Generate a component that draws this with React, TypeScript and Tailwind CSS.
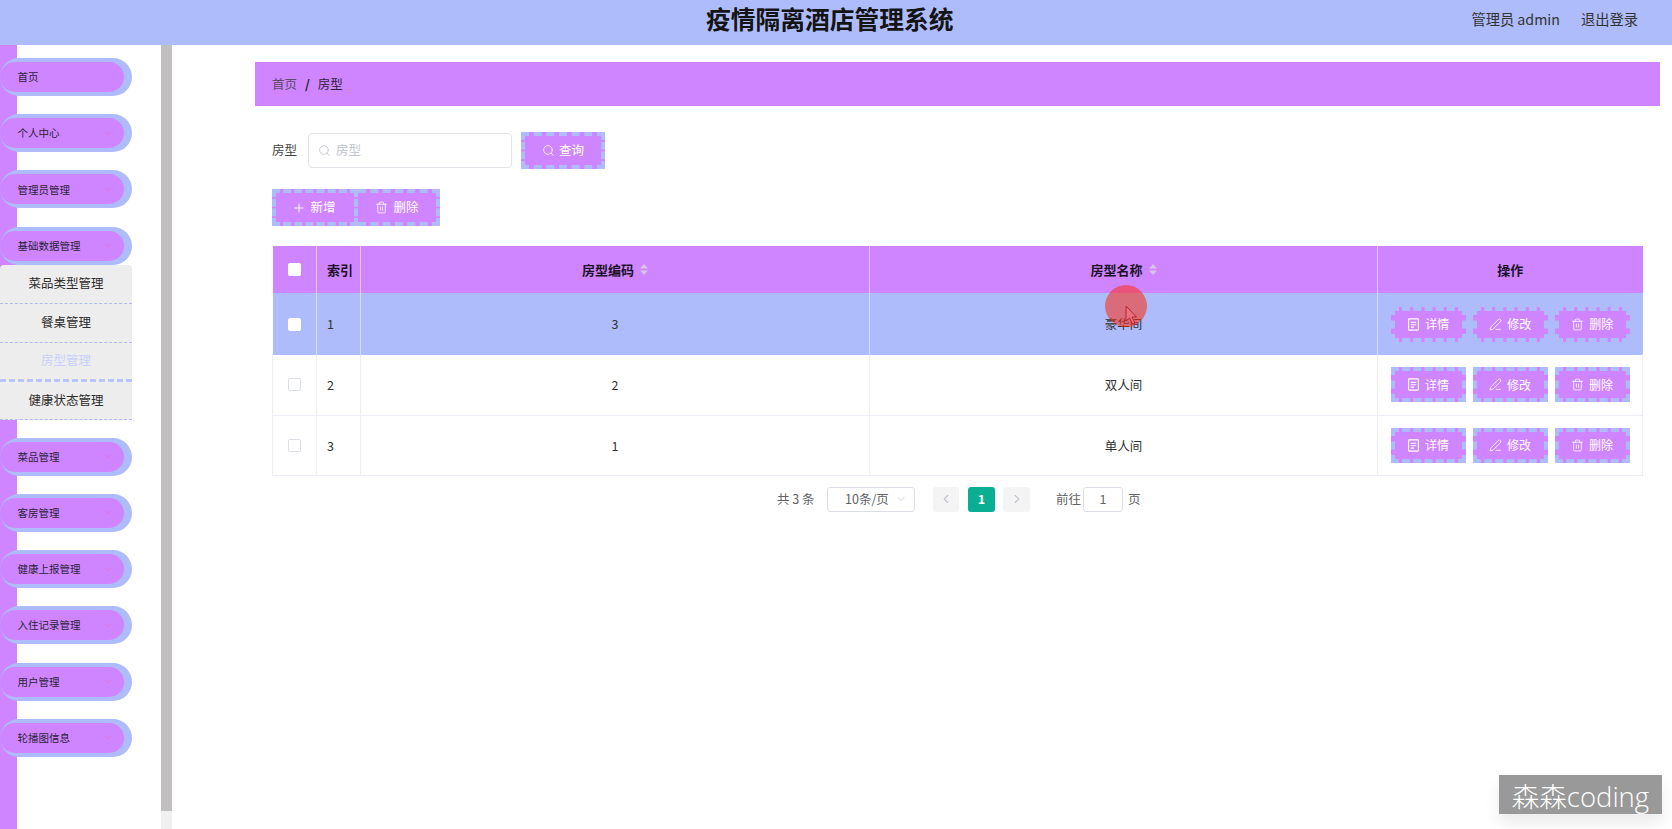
import React from 'react';
import { ChevronDown, ChevronLeft, ChevronRight, PenLine, Plus, Search, Trash2 } from 'lucide-react';

const menuTop = ['首页', '个人中心', '管理员管理', '基础数据管理'];
const menuBottom = ['菜品管理', '客房管理', '健康上报管理', '入住记录管理', '用户管理', '轮播图信息'];
const rows = [
  { id: 1, code: '3', name: '豪华间' },
  { id: 2, code: '2', name: '双人间' },
  { id: 3, code: '1', name: '单人间' },
];

const MenuPill = ({ label, arrow = true }: { label: string; arrow?: boolean }) => (
  <div className="w-[132px] h-[38px] rounded-[19px] bg-[#aebcfb] py-[4px] pr-[8px]">
    <div className="h-full rounded-[15px] bg-[#cf85ff] pl-[17.5px] pr-[11px] flex items-center justify-between text-[10.5px] text-[#2b2338]">
      <span>{label}</span>
      {arrow && <ChevronDown className="w-[11px] h-[11px] text-[#e86cc8]" strokeWidth={1.5} />}
    </div>
  </div>
);

const TicketIcon = () => (
  <svg className="w-[13px] h-[13px]" viewBox="0 0 12 12" fill="none" stroke="currentColor" strokeWidth="1">
    <rect x="1.5" y="0.8" width="9" height="10.4" rx="0.5" />
    <path d="M3.5 4h5M3.5 6.2h5M3.5 8.4h3" />
  </svg>
);

const Caret = () => (
  <svg className="w-[8px] h-[11px] ml-[6px]" viewBox="0 0 8 11" fill="#d9c3e8">
    <path d="M4 0l4 4.5H0zM4 11L0 6.5h8z" />
  </svg>
);

const RowButton = ({ icon, label }: { icon: React.ReactNode; label: string }) => (
  <button className="w-[75px] h-[35px] bg-[#cf85ff] border-4 border-dashed border-[#aebcfb] text-white text-[12px] flex items-center justify-center gap-[5px]">
    {icon}
    <span>{label}</span>
  </button>
);

const App = () => {
  return (
    <div className="h-screen overflow-hidden flex flex-col bg-white font-['Noto_Sans_CJK_SC','Noto_Sans',sans-serif] text-[#333]">
      <header className="h-[45px] flex-none bg-[#aebcfb] flex items-center justify-between pl-[706px] pr-[34px] pb-[8px]">
        <h1 className="text-[24.75px] font-bold text-[#141414] leading-none whitespace-nowrap">疫情隔离酒店管理系统</h1>
        <div className="flex items-center gap-[21px] text-[14.25px] text-[#333]">
          <span>管理员 admin</span>
          <span>退出登录</span>
        </div>
      </header>

      <div className="flex-1 flex min-h-0">
        <aside className="w-[161px] flex-none pt-[13px] flex flex-col gap-[18.2px] bg-[linear-gradient(to_right,#cf85ff_17px,#ffffff_17px)]">
          {menuTop.slice(0, 3).map((m, i) => (
            <MenuPill key={m} label={m} arrow={i > 0} />
          ))}
          <div>
            <MenuPill label={menuTop[3]} />
            <div className="w-[132px] bg-[#eeeded] rounded-t-[4px] text-[12.5px] text-[#2c2c2c] text-center">
              <div className="h-[39px] flex items-center justify-center border-b border-dashed border-[#aebcfb]">菜品类型管理</div>
              <div className="h-[39px] flex items-center justify-center border-b border-dashed border-[#aebcfb]">餐桌管理</div>
              <div className="h-[39px] flex items-center justify-center border-b-[3px] border-dashed border-[#b9c5fb] text-[#c9d0fb]">房型管理</div>
              <div className="h-[38px] flex items-center justify-center border-b border-dashed border-[#aebcfb]">健康状态管理</div>
            </div>
          </div>
          {menuBottom.map((m) => (
            <MenuPill key={m} label={m} />
          ))}
        </aside>

        <div className="w-[11px] flex-none flex flex-col bg-[#f1f0f1]">
          <div className="h-[766px] bg-[#c1bfc0]" />
        </div>

        <main className="flex-1 min-w-0 pt-[17px] pl-[83px] pr-[12px]">
          <div className="h-[44px] bg-[#cf85ff] flex items-center pl-[17px] text-[12.5px]">
            <span className="text-[#5b4a68]">首页</span>
            <span className="mx-[8px] font-bold text-[#222]">/</span>
            <span className="text-[#2b2338]">房型</span>
          </div>

          <div className="pl-[17px] pr-[17px]">
            <div className="mt-[26px] h-[37px] flex items-center text-[12.5px]">
              <span className="w-[36px] text-[#444]">房型</span>
              <div className="w-[204px] h-[35px] rounded-[4px] border border-[#e2e4ea] bg-white flex items-center pl-[9px] gap-[5px] text-[#c0c4cc]">
                <Search className="w-[13px] h-[13px]" strokeWidth={1.5} />
                <span>房型</span>
              </div>
              <button className="ml-[9px] w-[84px] h-[37px] bg-[#cf85ff] border-4 border-dashed border-[#aebcfb] text-white flex items-center justify-center gap-[4px]">
                <Search className="w-[13px] h-[13px]" strokeWidth={1.5} />
                <span>查询</span>
              </button>
            </div>

            <div className="mt-[20px] h-[37px] flex text-[12.5px] text-white">
              <button className="w-[86px] h-full bg-[#cf85ff] border-4 border-dashed border-[#aebcfb] flex items-center justify-center gap-[4px] pr-[2px]">
                <Plus className="w-[14px] h-[14px]" strokeWidth={1.5} />
                <span>新增</span>
              </button>
              <button className="w-[82px] h-full bg-[#cf85ff] border-y-4 border-r-4 border-dashed border-[#aebcfb] flex items-center justify-center gap-[5px]">
                <Trash2 className="w-[13px] h-[13px]" strokeWidth={1.5} />
                <span>删除</span>
              </button>
            </div>

            <div className="relative mt-[20px]">
              <table className="w-full table-fixed border-collapse text-[12.5px] text-[#333]">
                <colgroup>
                  <col className="w-[44px]" />
                  <col className="w-[44px]" />
                  <col className="w-[509px]" />
                  <col className="w-[508px]" />
                  <col />
                </colgroup>
                <thead>
                  <tr className="h-[47px] bg-[#cf85ff] text-[#1c1326] font-bold text-[13px]">
                    <th className="border-r border-[#e6c4ff]">
                      <span className="block w-[13px] h-[13px] mx-auto rounded-[2px] bg-white" />
                    </th>
                    <th className="border-r border-[#e6c4ff] pl-[10px] text-left">索引</th>
                    <th className="border-r border-[#e6c4ff]">
                      <div className="flex items-center justify-center">房型编码<Caret /></div>
                    </th>
                    <th className="border-r border-[#e6c4ff]">
                      <div className="flex items-center justify-center">房型名称<Caret /></div>
                    </th>
                    <th>操作</th>
                  </tr>
                </thead>
                <tbody>
                  {rows.map((r, i) => {
                    const hover = i === 0;
                    const cell = hover ? 'border-r border-[#d5dcfd]' : 'border-r border-[#ebeef5]';
                    return (
                      <tr key={r.id} className={`${i === 2 ? 'h-[60px]' : 'h-[61px]'} border-b ${hover ? 'bg-[#aebcfb] border-[#aebcfb]' : 'border-[#ebeef5]'}`}>
                        <td className={`${cell} ${hover ? 'pt-[2px]' : 'border-l border-l-[#ebeef5]'}`}>
                          <span className={`block w-[13px] h-[13px] mx-auto rounded-[2px] border bg-white ${hover ? 'border-white' : 'border-[#dcdfe6]'}`} />
                        </td>
                        <td className={`${cell} pl-[10px] pt-[2px]`}>{r.id}</td>
                        <td className={`${cell} pt-[2px] text-center`}>{r.code}</td>
                        <td className={`${cell} pt-[2px] text-center`}>{r.name}</td>
                        <td className={hover ? 'pt-[2px]' : 'border-r border-[#ebeef5]'}>
                          <div className="flex justify-center gap-[7px]">
                            <RowButton icon={<TicketIcon />} label="详情" />
                            <RowButton icon={<PenLine className="w-[13px] h-[13px]" strokeWidth={1.5} />} label="修改" />
                            <RowButton icon={<Trash2 className="w-[13px] h-[13px]" strokeWidth={1.5} />} label="删除" />
                          </div>
                        </td>
                      </tr>
                    );
                  })}
                </tbody>
              </table>

              {/* recorded mouse pointer */}
              <div className="absolute left-[833px] top-[39px] w-[42px] h-[42px] rounded-full bg-[#ff2a10]/55" />
              <svg className="absolute left-[853px] top-[59px] w-[13px] h-[21px]" viewBox="0 0 13 21" fill="#e8707f" stroke="#b5242f" strokeWidth="1">
                <path d="M1 1v15l3.5-3 3 6 2.5-1-3-6h4.5z" />
              </svg>
            </div>

            <div className="mt-[11px] h-[25px] flex items-center pl-[505px] text-[12.5px] text-[#606266]">
              <span className="w-[50px]">共 3 条</span>
              <div className="w-[88px] h-[25px] rounded-[3px] border border-[#dcdfe6] flex items-center justify-between pl-[17px] pr-[7px]">
                <span>10条/页</span>
                <ChevronDown className="w-[12px] h-[12px] text-[#c0c4cc]" strokeWidth={1.5} />
              </div>
              <div className="ml-[18px] w-[26px] h-[25px] rounded-[3px] bg-[#f4f4f5] flex items-center justify-center text-[#c0c4cc]">
                <ChevronLeft className="w-[14px] h-[14px]" strokeWidth={2} />
              </div>
              <div className="ml-[9px] w-[27px] h-[25px] rounded-[3px] bg-[#0aae93] flex items-center justify-center text-white font-bold">1</div>
              <div className="ml-[8px] w-[27px] h-[25px] rounded-[3px] bg-[#f4f4f5] flex items-center justify-center text-[#c0c4cc]">
                <ChevronRight className="w-[14px] h-[14px]" strokeWidth={2} />
              </div>
              <span className="ml-[26px]">前往</span>
              <div className="ml-[2px] w-[40px] h-[25px] rounded-[3px] border border-[#dcdfe6] flex items-center justify-center">1</div>
              <span className="ml-[5px]">页</span>
            </div>
          </div>
        </main>
      </div>

      <div className="absolute left-[1499px] top-[775px] w-[163px] h-[39px] bg-[#999999] shadow-[0_10px_16px_rgba(0,0,0,0.08)] text-white text-[27.5px] leading-[44px] font-light text-center whitespace-nowrap font-['Open_Sans','Noto_Sans_CJK_SC',sans-serif]">
        森森coding
      </div>
    </div>
  );
};

export default App;
